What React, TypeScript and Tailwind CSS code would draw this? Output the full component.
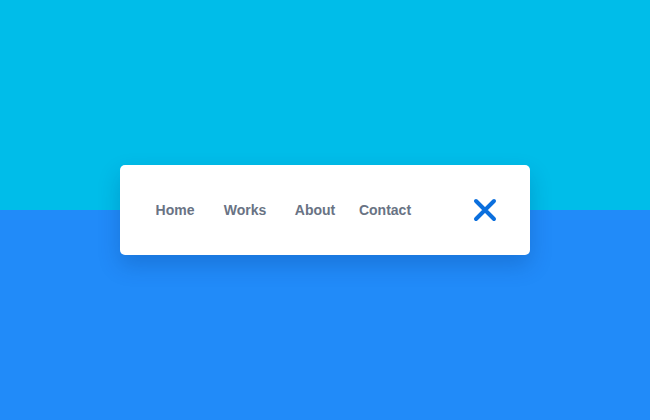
import React from 'react';

const links = ['Home', 'Works', 'About', 'Contact'];

const App = () => {
  return (
    <div className="relative h-[420px] w-[650px] overflow-hidden font-['Liberation_Sans',Arial,sans-serif]">
      {/* two-tone background */}
      <div className="flex h-full flex-col">
        <div className="h-[210px] bg-[#00bde9]" />
        <div className="flex-1 bg-[#218bf9]" />
      </div>

      {/* menu card */}
      <div className="absolute left-[120px] top-[165px] flex h-[90px] w-[410px] items-center rounded-[5px] bg-white pl-[20px] shadow-[0_10px_22px_rgba(0,40,110,0.22)]">
        <nav className="flex">
          {links.map((link) => (
            <a
              key={link}
              href="#"
              className="w-[70px] text-center text-[14px] font-bold text-[#697384]"
            >
              {link}
            </a>
          ))}
        </nav>
        <button className="ml-auto mr-[33px] flex h-[24px] w-[24px] items-center justify-center">
          <svg width="24" height="24" viewBox="0 0 24 24" fill="none">
            <path
              d="M3 3 L21 21 M21 3 L3 21"
              stroke="#0b6fdd"
              strokeWidth="4"
              strokeLinecap="round"
            />
          </svg>
        </button>
      </div>
    </div>
  );
};

export default App;
